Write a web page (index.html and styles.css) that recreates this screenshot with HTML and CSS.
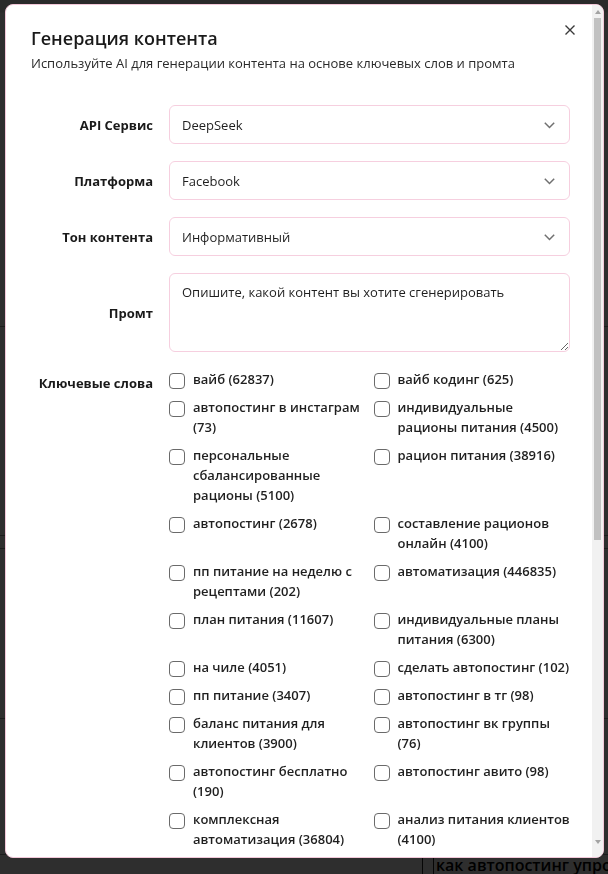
FILE: index.html
```html
<!DOCTYPE html>
<html lang="ru">
<head>
<meta charset="utf-8">
<title>Генерация контента</title>
<link rel="stylesheet" href="styles.css">
</head>
<body>
<div class="page">
  <div class="topbar"></div>
  <div class="prow prow-a"></div>
  <div class="prow prow-b"></div>
  <div class="prow prow-c"></div>
  <div class="prow prow-d"></div>
  <div class="prow prow-e"></div>
  <div class="prow prow-f">
    <div class="pcell"></div>
    <div class="pcell pcell-narrow"></div>
    <div class="pcell pcell-text">как автопостинг упрощает работу</div>
  </div>
</div>

<div class="overlay">
  <div class="modal">
    <div class="modal-scroll">
      <h2 class="title">Генерация контента</h2>
      <p class="desc">Используйте AI для генерации контента на основе ключевых слов и промта</p>

      <form class="form">
        <label class="lbl">API Сервис</label>
        <div class="select-wrap">
          <select class="select"><option>DeepSeek</option></select>
          <svg class="chev" width="11" height="7" viewBox="0 0 11 7"><path d="M0.8 0.8L5.5 5.5L10.2 0.8" stroke="#707070" stroke-width="1.5" fill="none"/></svg>
        </div>

        <label class="lbl">Платформа</label>
        <div class="select-wrap">
          <select class="select"><option>Facebook</option></select>
          <svg class="chev" width="11" height="7" viewBox="0 0 11 7"><path d="M0.8 0.8L5.5 5.5L10.2 0.8" stroke="#707070" stroke-width="1.5" fill="none"/></svg>
        </div>

        <label class="lbl">Тон контента</label>
        <div class="select-wrap">
          <select class="select"><option>Информативный</option></select>
          <svg class="chev" width="11" height="7" viewBox="0 0 11 7"><path d="M0.8 0.8L5.5 5.5L10.2 0.8" stroke="#707070" stroke-width="1.5" fill="none"/></svg>
        </div>

        <label class="lbl">Промт</label>
        <textarea class="textarea" placeholder="Опишите, какой контент вы хотите сгенерировать"></textarea>

        <div class="lbl lbl-top">Ключевые слова</div>
        <div class="kw-grid">
          <label class="kw"><input type="checkbox" class="cb"><span>вайб (62837)</span></label>
          <label class="kw"><input type="checkbox" class="cb"><span>вайб кодинг (625)</span></label>
          <label class="kw"><input type="checkbox" class="cb"><span>автопостинг в инстаграм (73)</span></label>
          <label class="kw"><input type="checkbox" class="cb"><span>индивидуальные рационы питания (4500)</span></label>
          <label class="kw"><input type="checkbox" class="cb"><span>персональные сбалансированные рационы (5100)</span></label>
          <label class="kw"><input type="checkbox" class="cb"><span>рацион питания (38916)</span></label>
          <label class="kw"><input type="checkbox" class="cb"><span>автопостинг (2678)</span></label>
          <label class="kw"><input type="checkbox" class="cb"><span>составление рационов онлайн (4100)</span></label>
          <label class="kw"><input type="checkbox" class="cb"><span>пп питание на неделю с рецептами (202)</span></label>
          <label class="kw"><input type="checkbox" class="cb"><span>автоматизация (446835)</span></label>
          <label class="kw"><input type="checkbox" class="cb"><span>план питания (11607)</span></label>
          <label class="kw"><input type="checkbox" class="cb"><span>индивидуальные планы питания (6300)</span></label>
          <label class="kw"><input type="checkbox" class="cb"><span>на чиле (4051)</span></label>
          <label class="kw"><input type="checkbox" class="cb"><span>сделать автопостинг (102)</span></label>
          <label class="kw"><input type="checkbox" class="cb"><span>пп питание (3407)</span></label>
          <label class="kw"><input type="checkbox" class="cb"><span>автопостинг в тг (98)</span></label>
          <label class="kw"><input type="checkbox" class="cb"><span>баланс питания для клиентов (3900)</span></label>
          <label class="kw"><input type="checkbox" class="cb"><span>автопостинг вк группы (76)</span></label>
          <label class="kw"><input type="checkbox" class="cb"><span>автопостинг бесплатно (190)</span></label>
          <label class="kw"><input type="checkbox" class="cb"><span>автопостинг авито (98)</span></label>
          <label class="kw"><input type="checkbox" class="cb"><span>комплексная автоматизация (36804)</span></label>
          <label class="kw"><input type="checkbox" class="cb"><span>анализ питания клиентов (4100)</span></label>
          <label class="kw"><input type="checkbox" class="cb"><span>создание рационов для клиентов (2900)</span></label>
          <label class="kw"><input type="checkbox" class="cb"><span>индивидуальный рацион питания (5400)</span></label>
          <label class="kw"><input type="checkbox" class="cb"><span>автопостинг в телеграм (310)</span></label>
          <label class="kw"><input type="checkbox" class="cb"><span>генерация контента (1870)</span></label>
          <label class="kw"><input type="checkbox" class="cb"><span>ai для контента (940)</span></label>
          <label class="kw"><input type="checkbox" class="cb"><span>контент план (22150)</span></label>
          <label class="kw"><input type="checkbox" class="cb"><span>рацион на неделю (12800)</span></label>
          <label class="kw"><input type="checkbox" class="cb"><span>подбор рациона (3600)</span></label>
          <label class="kw"><input type="checkbox" class="cb"><span>автопостинг пинтерест (45)</span></label>
          <label class="kw"><input type="checkbox" class="cb"><span>автоматизация соцсетей (1240)</span></label>
          <label class="kw"><input type="checkbox" class="cb"><span>нутрициолог онлайн (8700)</span></label>
          <label class="kw"><input type="checkbox" class="cb"><span>пп рецепты (64210)</span></label>
        </div>
      </form>

      <div class="footer">
        <button class="btn btn-ghost" type="button">Отмена</button>
        <button class="btn btn-primary" type="button">Сгенерировать</button>
      </div>
    </div>

    <button class="close" type="button" aria-label="Закрыть">
      <svg width="10" height="10" viewBox="0 0 10 10"><path d="M0.5 0.5L9.5 9.5M9.5 0.5L0.5 9.5" stroke="#3a3a3a" stroke-width="1.4" fill="none"/></svg>
    </button>

    <div class="sbar" aria-hidden="true">
      <div class="sbar-btn sbar-up"></div>
      <div class="sbar-track">
        <div class="sbar-thumb"></div>
      </div>
      <div class="sbar-btn sbar-down"></div>
    </div>
  </div>
</div>
</body>
</html>
```

FILE: styles.css
```css
html, body {
  margin: 0;
  padding: 0;
}

body {
  font-family: "Open Sans", "Noto Sans", "DejaVu Sans", sans-serif;
  color: #1f1f1f;
  background: #ffffff;
  width: 608px;
  height: 874px;
  overflow: hidden;
}

/* ---------- background page (under the overlay) ---------- */
.page {
  display: flex;
  flex-direction: column;
  height: 874px;
}

.topbar {
  height: 12px;
  background: #e8e8e8;
  border-bottom: 1px solid #f4f4f4;
}

.prow {
  border-bottom: 1px solid #9a9a9a;
}

.prow-a { height: 314px; }
.prow-b { height: 209px; }
.prow-c { height: 12px; }
.prow-d { height: 170px; }
.prow-e { height: 135px; }

.prow-f {
  flex: 1;
  display: flex;
  border-bottom: none;
}

.pcell {
  width: 422px;
}

.pcell-narrow {
  width: 10px;
  border-left: 1px solid #222;
  border-right: 1px solid #222;
}

.pcell-text {
  flex: 1;
  padding: 1px 0 0 2px;
  font-size: 16px;
  font-weight: 600;
  line-height: 18px;
  color: #000;
  white-space: nowrap;
  overflow: hidden;
}

/* ---------- overlay & modal ---------- */
.overlay {
  position: fixed;
  inset: 0;
  background: rgba(0, 0, 0, 0.82);
  display: flex;
  align-items: flex-start;
  padding: 4px 0 0 5px;
  box-sizing: border-box;
}

.modal {
  position: relative;
  width: 599px;
  height: 854px;
  box-sizing: border-box;
  background: #ffffff;
  border: 1px solid #f2c7d8;
  border-radius: 8px;
  overflow: hidden;
}

.modal-scroll {
  height: 100%;
  box-sizing: border-box;
  overflow-y: auto;
  scrollbar-width: none;
  padding: 21px 33px 24px 25px;
}

.modal-scroll::-webkit-scrollbar {
  display: none;
}

/* scrollbar drawn over the right edge of the modal */
.sbar {
  position: absolute;
  top: 0;
  right: 0;
  bottom: 0;
  width: 11px;
  background: #f1f1f1;
  display: flex;
  flex-direction: column;
}

.sbar-btn {
  height: 13px;
  flex: none;
  display: flex;
  justify-content: center;
  align-items: center;
}

.sbar-up::before,
.sbar-down::before {
  content: "";
  width: 0;
  height: 0;
  border-left: 3.5px solid transparent;
  border-right: 3.5px solid transparent;
}

.sbar-up::before {
  border-bottom: 4px solid #a3a3a3;
}

.sbar-down::before {
  border-top: 4px solid #a3a3a3;
}

.sbar-down {
  height: 18px;
  align-items: flex-start;
  padding-top: 1px;
  box-sizing: border-box;
}

.sbar-track {
  flex: 1;
  padding: 0 2px;
}

.sbar-thumb {
  height: 522px;
  background: #c1c1c1;
}

.close {
  position: absolute;
  top: 15px;
  right: 23px;
  width: 20px;
  height: 20px;
  padding: 0;
  border: none;
  background: transparent;
  display: flex;
  align-items: center;
  justify-content: center;
  cursor: pointer;
}

.title {
  margin: 0;
  font-size: 18px;
  line-height: 24px;
  font-weight: 600;
  color: #1a1a1a;
}

.desc {
  margin: 3px 0 0;
  font-size: 13px;
  line-height: 20px;
  color: #2a2a2a;
}

/* ---------- form ---------- */
.form {
  margin-top: 32px;
  display: grid;
  grid-template-columns: 122px 401px;
  column-gap: 16px;
  row-gap: 17px;
  align-items: center;
}

.lbl {
  text-align: right;
  font-size: 13px;
  font-weight: 700;
  line-height: 20px;
  color: #1a1a1a;
}

.lbl-top {
  align-self: start;
  padding-top: 4px;
}

.select-wrap {
  position: relative;
}

.select {
  -webkit-appearance: none;
  appearance: none;
  width: 100%;
  height: 39px;
  box-sizing: border-box;
  border: 1px solid #f6cfdf;
  border-radius: 6px;
  background: #ffffff;
  padding: 0 30px 0 12px;
  font: 13px/20px "Open Sans", "Noto Sans", sans-serif;
  color: #1f1f1f;
  outline: none;
}

.chev {
  position: absolute;
  right: 15px;
  top: 17px;
  pointer-events: none;
}

.textarea {
  display: block;
  width: 100%;
  height: 79px;
  box-sizing: border-box;
  border: 1px solid #f6cfdf;
  border-radius: 6px;
  padding: 8px 12px;
  font: 13px/20px "Open Sans", "Noto Sans", sans-serif;
  color: #1f1f1f;
  resize: vertical;
  outline: none;
}

.textarea::placeholder {
  color: #1f1f1f;
  opacity: 1;
}

/* ---------- keywords ---------- */
.kw-grid {
  align-self: start;
  display: grid;
  grid-template-columns: 1fr 1fr;
  column-gap: 8px;
  row-gap: 8px;
}

.kw {
  display: flex;
  align-items: flex-start;
  gap: 8px;
  font-size: 13px;
  line-height: 20px;
  font-weight: 600;
  color: #1f1f1f;
}

.cb {
  -webkit-appearance: none;
  appearance: none;
  flex: none;
  width: 16px;
  height: 16px;
  margin: 4px 0 0;
  box-sizing: border-box;
  border: 1px solid #6a6a6a;
  border-radius: 4px;
  background: #ffffff;
}

/* ---------- footer ---------- */
.footer {
  margin-top: 28px;
  display: flex;
  justify-content: flex-end;
  gap: 10px;
}

.btn {
  height: 38px;
  padding: 0 18px;
  border-radius: 6px;
  font: 600 13px/20px "Open Sans", "Noto Sans", sans-serif;
  cursor: pointer;
}

.btn-ghost {
  background: #ffffff;
  border: 1px solid #f6cfdf;
  color: #1f1f1f;
}

.btn-primary {
  background: #e94b8a;
  border: 1px solid #e94b8a;
  color: #ffffff;
}
```
